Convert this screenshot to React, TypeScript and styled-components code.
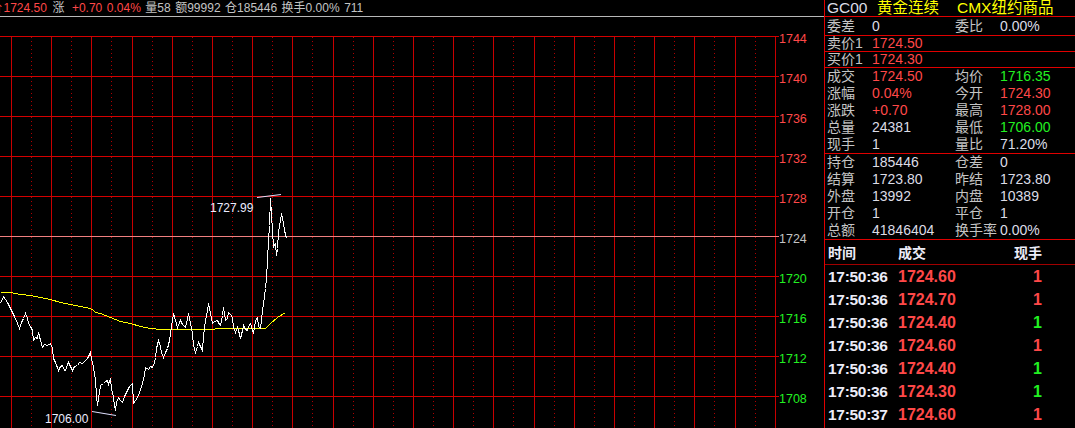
import React from "react";
import styled, { createGlobalStyle } from "styled-components";

const GlobalStyle = createGlobalStyle`
  html, body { margin: 0; padding: 0; background: #000; }
  * { box-sizing: border-box; }
`;

const FONT = `"Liberation Sans", "Noto Sans CJK SC", sans-serif`;

type Tone = "red" | "green" | "white" | "gray" | "yellow";
const toneColor: Record<Tone, string> = {
  red: "#ff4848",
  green: "#22f022",
  white: "#dcdce6",
  gray: "#c4c4c4",
  yellow: "#ffff00",
};

const Screen = styled.div`
  width: 1075px;
  height: 428px;
  display: flex;
  overflow: hidden;
  background: #000;
  font-family: ${FONT};
`;

const LeftPane = styled.div`
  width: 824px;
  flex: none;
  display: flex;
  flex-direction: column;
`;

const TopBar = styled.div`
  height: 17px;
  flex: none;
  border-bottom: 1px solid #b8b8b8;
  display: flex;
  align-items: center;
  gap: 4.5px;
  font-size: 12px;
  line-height: 16px;
  white-space: nowrap;
  overflow: hidden;
`;

const Quote = styled.span<{ $tone: Tone; $lead?: number }>`
  color: ${(p) => toneColor[p.$tone]};
  margin-left: ${(p) => (p.$lead ? `${p.$lead}px` : "0")};
`;

const ChartArea = styled.div`
  flex: 1;
  display: flex;
  min-height: 0;
`;

const PlotSvg = styled.svg`
  display: block;
  flex: none;
  width: 779px;
  height: 411px;
`;

const AxisColumn = styled.div`
  flex: 1;
  padding-top: 15px;
  display: flex;
  flex-direction: column;
  overflow: hidden;
`;

const AxisLabel = styled.div<{ $tone: Tone }>`
  height: 40px;
  flex: none;
  font-size: 12.5px;
  line-height: 14px;
  color: ${(p) => toneColor[p.$tone]};
`;

const RightPane = styled.div`
  width: 251px;
  flex: none;
  border-left: 1px solid #e00000;
  display: flex;
  flex-direction: column;
`;

const PanelHeader = styled.div`
  height: 17px;
  flex: none;
  border-bottom: 1px solid #e00000;
  display: grid;
  grid-template-columns: 50px 80px auto;
  padding-left: 2px;
  font-size: 15.5px;
  line-height: 16px;
  white-space: nowrap;
`;

const HeaderText = styled.span<{ $tone: Tone }>`
  color: ${(p) => toneColor[p.$tone]};
`;

const InfoSection = styled.div`
  flex: none;
  border-bottom: 1px solid #e00000;
  display: flex;
  flex-direction: column;
`;

const InfoRow = styled.div<{ $h: number }>`
  height: ${(p) => p.$h}px;
  display: grid;
  grid-template-columns: 45px 83px 45px 1fr;
  align-items: center;
  padding-left: 2px;
  font-size: 14px;
  line-height: ${(p) => p.$h}px;
  white-space: nowrap;
`;

const Cell = styled.span<{ $tone: Tone }>`
  color: ${(p) => toneColor[p.$tone]};
`;

const TickHeader = styled.div`
  height: 25px;
  flex: none;
  border-bottom: 1px solid #a00000;
  display: grid;
  grid-template-columns: 70px 1fr auto;
  align-items: center;
  padding: 0 33px 0 3px;
  font-size: 14px;
  font-weight: bold;
  color: #ececf8;
`;

const TickRow = styled.div`
  height: 23px;
  flex: none;
  display: grid;
  grid-template-columns: 70px 1fr auto;
  align-items: center;
  padding: 0 33px 0 3px;
  font-size: 16px;
  font-weight: bold;
  white-space: nowrap;
`;

const TickTime = styled.span`
  color: #ececf8;
  font-size: 15.5px;
  letter-spacing: -0.3px;
`;

const TickPrice = styled.span`
  color: #ff4848;
`;

const TickQty = styled.span<{ $tone: Tone }>`
  color: ${(p) => toneColor[p.$tone]};
  text-align: right;
`;

const topQuotes: { text: string; tone: Tone; lead?: number }[] = [
  { text: "价", tone: "red", lead: -10 },
  { text: "1724.50", tone: "red", lead: -3 },
  { text: "涨", tone: "gray", lead: 1 },
  { text: "+0.70", tone: "red", lead: 3 },
  { text: "0.04%", tone: "red" },
  { text: "量58", tone: "gray" },
  { text: "额99992", tone: "gray" },
  { text: "仓185446", tone: "gray" },
  { text: "换手0.00%", tone: "gray" },
  { text: "711", tone: "gray" },
];

const axisLabels: { text: string; tone: Tone }[] = [
  { text: "1744", tone: "red" },
  { text: "1740", tone: "red" },
  { text: "1736", tone: "red" },
  { text: "1732", tone: "red" },
  { text: "1728", tone: "red" },
  { text: "1724", tone: "gray" },
  { text: "1720", tone: "green" },
  { text: "1716", tone: "green" },
  { text: "1712", tone: "green" },
  { text: "1708", tone: "green" },
];

type Pair = [string, string, Tone];
const infoGroups: { h: number; rows: [Pair, Pair | null][] }[] = [
  { h: 18, rows: [[["委差", "0", "white"], ["委比", "0.00%", "white"]]] },
  { h: 15, rows: [[["卖价1", "1724.50", "red"], null]] },
  { h: 15, rows: [[["买价1", "1724.30", "red"], null]] },
  {
    h: 17,
    rows: [
      [["成交", "1724.50", "red"], ["均价", "1716.35", "green"]],
      [["涨幅", "0.04%", "red"], ["今开", "1724.30", "red"]],
      [["涨跌", "+0.70", "red"], ["最高", "1728.00", "red"]],
      [["总量", "24381", "white"], ["最低", "1706.00", "green"]],
      [["现手", "1", "white"], ["量比", "71.20%", "white"]],
    ],
  },
  {
    h: 17,
    rows: [
      [["持仓", "185446", "white"], ["仓差", "0", "white"]],
      [["结算", "1723.80", "white"], ["昨结", "1723.80", "white"]],
      [["外盘", "13992", "white"], ["内盘", "10389", "white"]],
      [["开仓", "1", "white"], ["平仓", "1", "white"]],
      [["总额", "41846404", "white"], ["换手率", "0.00%", "white"]],
    ],
  },
];

const ticks: { time: string; price: string; qty: string; tone: Tone }[] = [
  { time: "17:50:36", price: "1724.60", qty: "1", tone: "red" },
  { time: "17:50:36", price: "1724.70", qty: "1", tone: "red" },
  { time: "17:50:36", price: "1724.40", qty: "1", tone: "green" },
  { time: "17:50:36", price: "1724.60", qty: "1", tone: "red" },
  { time: "17:50:36", price: "1724.40", qty: "1", tone: "green" },
  { time: "17:50:36", price: "1724.30", qty: "1", tone: "green" },
  { time: "17:50:37", price: "1724.60", qty: "1", tone: "red" },
];

const pricePts: number[] = [
  0, 303, 3, 296, 7, 302, 10, 308, 12, 312, 14, 316, 17, 323, 19, 328, 21, 322, 23, 318, 25, 313,
  27, 318, 28, 323, 30, 326, 32, 330, 33, 340, 35, 337, 37, 338, 38, 332, 40, 340, 42, 347, 44, 344,
  47, 345, 50, 343, 52, 348, 53, 358, 55, 362, 58, 370, 60, 366, 62, 365, 64, 370, 65, 370, 67, 364,
  68, 362, 70, 366, 72, 370, 74, 366, 77, 365, 79, 362, 82, 363, 84, 361, 87, 358, 89, 354, 90, 352,
  91, 358, 93, 367, 95, 380, 96, 395, 97, 405, 98, 398, 100, 385, 103, 383, 105, 381, 107, 380,
  108, 384, 110, 378, 111, 388, 113, 397, 114, 405, 115, 410, 116, 402, 118, 397, 120, 400, 122, 402,
  124, 396, 127, 390, 129, 386, 132, 383, 133, 403, 135, 400, 137, 397, 139, 392, 142, 383, 144, 374,
  145, 367, 148, 369, 150, 366, 152, 367, 154, 362, 155, 357, 156, 348, 158, 340, 160, 346, 161, 352,
  163, 357, 165, 352, 167, 348, 169, 340, 170, 333, 171, 326, 173, 313, 175, 320, 177, 327, 179, 322,
  180, 320, 182, 324, 185, 327, 187, 318, 188, 313, 190, 323, 192, 333, 193, 345, 195, 352, 197, 346,
  198, 342, 200, 346, 202, 350, 203, 335, 205, 320, 207, 310, 208, 303, 210, 313, 212, 323, 214, 321,
  217, 320, 219, 324, 220, 325, 222, 315, 223, 307, 225, 320, 227, 318, 228, 312, 230, 314, 232, 317,
  233, 327, 235, 332, 237, 327, 238, 330, 240, 338, 242, 330, 243, 325, 245, 329, 247, 330, 248, 326,
  250, 323, 252, 330, 253, 333, 255, 320, 257, 317, 258, 326, 260, 328, 262, 310, 263, 303, 265, 288,
  266, 278, 267, 260, 268, 240, 269, 225, 270, 198, 271, 215, 272, 230, 273, 247, 274, 244, 275, 243,
  276, 255, 277, 248, 278, 232, 280, 220, 281, 213, 282, 218, 283, 222, 284, 230, 286, 238,
];

const avgPts: number[] = [
  0, 292, 10, 292, 20, 294, 30, 295, 40, 297, 50, 299, 60, 302, 70, 304, 80, 306, 90, 308, 93, 310,
  95, 312, 100, 313, 110, 317, 120, 321, 130, 323, 140, 326, 150, 328, 160, 329, 200, 329, 230, 328,
  265, 328, 270, 323, 277, 317, 285, 312,
];

const toPoints = (a: number[]) => {
  const out: string[] = [];
  for (let i = 0; i < a.length; i += 2) out.push(`${a[i] + 0.5},${a[i + 1] + 0.5}`);
  return out.join(" ");
};

const hLines = Array.from({ length: 10 }, (_, k) => 36 + 40 * k);
const solidV = Array.from({ length: 19 }, (_, k) => Math.round(11 + 40.2 * k));
const dottedV = Array.from({ length: 19 }, (_, k) => Math.round(31 + 40.2 * k));

function Chart() {
  return (
    <PlotSvg viewBox="0 17 779 411" shapeRendering="crispEdges">
      {dottedV.map((x) => (
        <line key={`d${x}`} x1={x + 0.5} y1={37} x2={x + 0.5} y2={428} stroke="#b00000" strokeDasharray="1 3" />
      ))}
      {solidV.map((x) => (
        <line key={`v${x}`} x1={x + 0.5} y1={36} x2={x + 0.5} y2={428} stroke="#c80000" />
      ))}
      <line x1={775.5} y1={36} x2={775.5} y2={428} stroke="#c80000" />
      {hLines.map((y, k) => (
        <line key={`h${y}`} x1={0} y1={y + 0.5} x2={779} y2={y + 0.5} stroke={k === 5 ? "#f08080" : "#d40000"} />
      ))}
      <polyline points={toPoints(avgPts)} fill="none" stroke="#ffff00" strokeWidth={1} />
      <polyline points={toPoints(pricePts)} fill="none" stroke="#ffffff" strokeWidth={1} />
      <line x1={257} y1={197.5} x2={281} y2={194.5} stroke="#e0e0ff" shapeRendering="auto" />
      <line x1={92} y1={411.5} x2={116} y2={415.5} stroke="#e0e0ff" shapeRendering="auto" />
      <text x={210} y={211.5} fontSize={12} fill="#ececff" fontFamily={FONT}>
        1727.99
      </text>
      <text x={45} y={422.5} fontSize={12} fill="#ececff" fontFamily={FONT}>
        1706.00
      </text>
    </PlotSvg>
  );
}

export default function App() {
  return (
    <>
      <GlobalStyle />
      <Screen>
        <LeftPane>
          <TopBar>
            {topQuotes.map((q, i) => (
              <Quote key={i} $tone={q.tone} $lead={q.lead}>
                {q.text}
              </Quote>
            ))}
          </TopBar>
          <ChartArea>
            <Chart />
            <AxisColumn>
              {axisLabels.map((a) => (
                <AxisLabel key={a.text} $tone={a.tone}>
                  {a.text}
                </AxisLabel>
              ))}
            </AxisColumn>
          </ChartArea>
        </LeftPane>
        <RightPane>
          <PanelHeader>
            <HeaderText $tone="white">GC00</HeaderText>
            <HeaderText $tone="yellow">黄金连续</HeaderText>
            <HeaderText $tone="yellow">CMX纽约商品</HeaderText>
          </PanelHeader>
          {infoGroups.map((g, gi) => (
            <InfoSection key={gi}>
              {g.rows.map(([a, b], ri) => (
                <InfoRow key={ri} $h={g.h}>
                  <Cell $tone="gray">{a[0]}</Cell>
                  <Cell $tone={a[2]}>{a[1]}</Cell>
                  {b ? (
                    <>
                      <Cell $tone="gray">{b[0]}</Cell>
                      <Cell $tone={b[2]}>{b[1]}</Cell>
                    </>
                  ) : null}
                </InfoRow>
              ))}
            </InfoSection>
          ))}
          <TickHeader>
            <span>时间</span>
            <span>成交</span>
            <span>现手</span>
          </TickHeader>
          {ticks.map((t, i) => (
            <TickRow key={i}>
              <TickTime>{t.time}</TickTime>
              <TickPrice>{t.price}</TickPrice>
              <TickQty $tone={t.tone}>{t.qty}</TickQty>
            </TickRow>
          ))}
        </RightPane>
      </Screen>
    </>
  );
}
